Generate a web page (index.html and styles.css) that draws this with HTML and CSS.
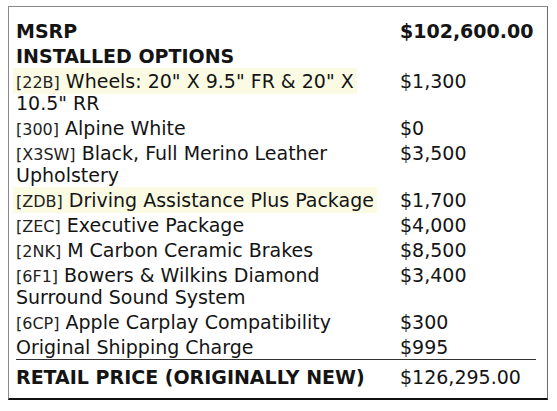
FILE: index.html
```html
<!DOCTYPE html>
<html>
<head>
<meta charset="utf-8">
<link rel="stylesheet" href="styles.css">
</head>
<body>
<div class="sticker">
  <table class="prices">
    <colgroup><col class="c-desc"><col class="c-amt"></colgroup>
    <tr class="head"><td>MSRP</td><td>$102,600.00</td></tr>
    <tr class="head"><td colspan="2">INSTALLED OPTIONS</td></tr>
    <tr><td><span class="hl"><span class="code">[22B]</span> Wheels: 20" X 9.5" FR &amp; 20" X</span> 10.5" RR</td><td>$1,300</td></tr>
    <tr><td><span class="code">[300]</span> Alpine White</td><td>$0</td></tr>
    <tr><td><span class="code">[X3SW]</span> Black, Full Merino Leather Upholstery</td><td>$3,500</td></tr>
    <tr><td><span class="hl"><span class="code">[ZDB]</span> Driving Assistance Plus Package</span></td><td>$1,700</td></tr>
    <tr><td><span class="code">[ZEC]</span> Executive Package</td><td>$4,000</td></tr>
    <tr><td><span class="code">[2NK]</span> M Carbon Ceramic Brakes</td><td>$8,500</td></tr>
    <tr><td><span class="code">[6F1]</span> Bowers &amp; Wilkins Diamond Surround Sound System</td><td>$3,400</td></tr>
    <tr><td><span class="code">[6CP]</span> Apple Carplay Compatibility</td><td>$300</td></tr>
    <tr><td>Original Shipping Charge</td><td>$995</td></tr>
    <tr class="total"><td>RETAIL PRICE (ORIGINALLY NEW)</td><td>$126,295.00</td></tr>
  </table>
</div>
</body>
</html>
```
FILE: styles.css
```css
html, body {
  margin: 0;
  padding: 0;
  background: #fff;
}
body {
  font-family: "DejaVu Sans", sans-serif;
  color: #141414;
  padding: 6px 0 0 8px;
}
.sticker {
  width: 520px;
  border-top: 1px solid #8a8a8a;
  border-left: 1px solid #8a8a8a;
  border-right: 1px solid #6a6a6a;
  border-bottom: 2px solid #111;
  padding: 11px 11px 9px 7px;
}
.prices {
  width: 520px;
  table-layout: fixed;
  border-collapse: collapse;
  font-size: 19px;
  line-height: 22px;
}
.c-desc { width: 384px; }
.c-amt { width: 136px; }
.prices td {
  padding: 2px 0 1px;
  vertical-align: top;
}
.head td {
  font-weight: bold;
}
.code {
  font-size: 16px;
  line-height: 1;
  color: #222;
}
.hl {
  background: #fbfbe4;
  padding: 2px 3px;
  margin-left: -3px;
}
.total td {
  border-top: 1px solid #333;
  padding-top: 6px;
  padding-bottom: 1px;
}
.total td:first-child {
  font-weight: bold;
}
```
